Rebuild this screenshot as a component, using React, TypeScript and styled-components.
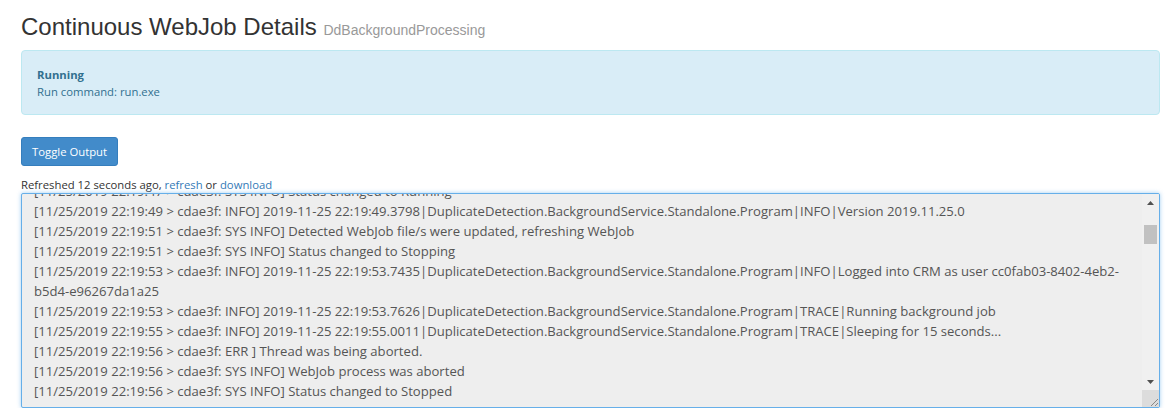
import styled, { createGlobalStyle } from "styled-components";

const GlobalStyle = createGlobalStyle`
  html, body {
    margin: 0;
    padding: 0;
    background: #fff;
  }
  body {
    font-family: "Open Sans", "Noto Sans", sans-serif;
    color: #333;
  }
`;

const logLines = [
  "[11/25/2019 22:19:47 > cdae3f: SYS INFO] Status changed to Running",
  "[11/25/2019 22:19:49 > cdae3f: INFO] 2019-11-25 22:19:49.3798|DuplicateDetection.BackgroundService.Standalone.Program|INFO|Version 2019.11.25.0",
  "[11/25/2019 22:19:51 > cdae3f: SYS INFO] Detected WebJob file/s were updated, refreshing WebJob",
  "[11/25/2019 22:19:51 > cdae3f: SYS INFO] Status changed to Stopping",
  "[11/25/2019 22:19:53 > cdae3f: INFO] 2019-11-25 22:19:53.7435|DuplicateDetection.BackgroundService.Standalone.Program|INFO|Logged into CRM as user cc0fab03-8402-4eb2-",
  "b5d4-e96267da1a25",
  "[11/25/2019 22:19:53 > cdae3f: INFO] 2019-11-25 22:19:53.7626|DuplicateDetection.BackgroundService.Standalone.Program|TRACE|Running background job",
  "[11/25/2019 22:19:55 > cdae3f: INFO] 2019-11-25 22:19:55.0011|DuplicateDetection.BackgroundService.Standalone.Program|TRACE|Sleeping for 15 seconds...",
  "[11/25/2019 22:19:56 > cdae3f: ERR ] Thread was being aborted.",
  "[11/25/2019 22:19:56 > cdae3f: SYS INFO] WebJob process was aborted",
  "[11/25/2019 22:19:56 > cdae3f: SYS INFO] Status changed to Stopped",
];

// the output box is shown scrolled a little, as in the live page
const scrollLog = (el: HTMLDivElement | null) => {
  if (el) el.scrollTop = 19;
};

export default function App() {
  return (
    <>
      <GlobalStyle />
      <Page>
        <Title>
          Continuous WebJob Details <Sub>DdBackgroundProcessing</Sub>
        </Title>
        <Alert>
          <AlertTitle>Running</AlertTitle>
          <AlertText>Run command: run.exe</AlertText>
        </Alert>
        <Button>Toggle Output</Button>
        <Refreshed>
          Refreshed 12 seconds ago, <Link href="#">refresh</Link> or{" "}
          <Link href="#">download</Link>
        </Refreshed>
        <LogBox>
          <LogView ref={scrollLog}>
            {logLines.map((l, i) => (
              <LogLine key={i}>{l}</LogLine>
            ))}
          </LogView>
          <ScrollBar>
            <Arrow>
              <svg width="7" height="4" viewBox="0 0 7 4">
                <path d="M0 4 L3.5 0 L7 4 Z" fill="#505050" />
              </svg>
            </Arrow>
            <Track>
              <Thumb />
            </Track>
            <Arrow>
              <svg width="7" height="4" viewBox="0 0 7 4">
                <path d="M0 0 L3.5 4 L7 0 Z" fill="#505050" />
              </svg>
            </Arrow>
            <Grip>
              <svg width="10" height="10" viewBox="0 0 10 10">
                <path d="M9 2 L2 9 M9 6 L6 9" stroke="#888" strokeWidth="1" />
              </svg>
            </Grip>
          </ScrollBar>
        </LogBox>
      </Page>
    </>
  );
}

const Page = styled.div`
  padding: 0 11px 0 21px;
  display: flex;
  flex-direction: column;
  align-items: flex-start;
`;

const Title = styled.h1`
  margin: 12px 0 0;
  font-family: "Liberation Sans", Arial, sans-serif;
  font-weight: 400;
  font-size: 24px;
  line-height: 30px;
  color: #333;
`;

const Sub = styled.small`
  font-size: 14px;
  color: #999;
`;

const Alert = styled.div`
  box-sizing: border-box;
  align-self: stretch;
  margin-top: 5px;
  height: 65px;
  padding: 15px 15px;
  background: #d9edf7;
  border: 1px solid #bce8f1;
  border-radius: 4px;
  color: #31708f;
  font-size: 11.3px;
`;

const AlertTitle = styled.div`
  font-weight: 700;
  line-height: 17px;
`;

const AlertText = styled.div`
  line-height: 17px;
`;

const Button = styled.button`
  margin-top: 22px;
  height: 29px;
  padding: 0 10px;
  background: #428bca;
  border: 1px solid #357ebd;
  border-radius: 3px;
  color: #fff;
  font-family: "Open Sans", sans-serif;
  font-size: 11.3px;
`;

const Refreshed = styled.div`
  margin-top: 11px;
  font-size: 11.3px;
  line-height: 16px;
  color: #333;
`;

const Link = styled.a`
  color: #337ab7;
  text-decoration: none;
`;

const LogBox = styled.div`
  box-sizing: border-box;
  align-self: stretch;
  height: 215px;
  display: flex;
  background: #eee;
  border: 1px solid #66afe9;
  border-radius: 2px;
  box-shadow: 0 0 4px rgba(102, 175, 233, 0.6);
  overflow: hidden;
`;

const LogView = styled.div`
  flex: 1;
  overflow: hidden;
  padding: 6px 12px;
`;

const LogLine = styled.div`
  font-size: 13.1px;
  line-height: 20px;
  color: #555;
  white-space: nowrap;
`;

const ScrollBar = styled.div`
  width: 17px;
  display: flex;
  flex-direction: column;
  background: #f0f0f0;
`;

const Arrow = styled.div`
  height: 17px;
  display: flex;
  align-items: center;
  justify-content: center;
`;

const Track = styled.div`
  flex: 1;
  padding-top: 14px;
`;

const Thumb = styled.div`
  margin: 0 2px;
  height: 19px;
  background: #c1c1c1;
`;

const Grip = styled.div`
  height: 17px;
  background: #dcdcdc;
  display: flex;
  align-items: flex-end;
  justify-content: flex-end;
`;
